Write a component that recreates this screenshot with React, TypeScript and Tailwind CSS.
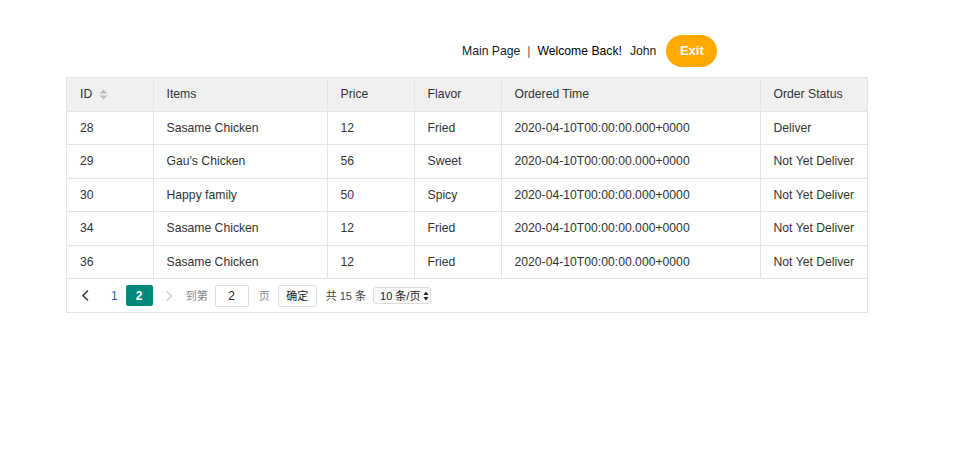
import React from "react";

const rows = [
  ["28", "Sasame Chicken", "12", "Fried", "2020-04-10T00:00:00.000+0000", "Deliver"],
  ["29", "Gau's Chicken", "56", "Sweet", "2020-04-10T00:00:00.000+0000", "Not Yet Deliver"],
  ["30", "Happy family", "50", "Spicy", "2020-04-10T00:00:00.000+0000", "Not Yet Deliver"],
  ["34", "Sasame Chicken", "12", "Fried", "2020-04-10T00:00:00.000+0000", "Not Yet Deliver"],
  ["36", "Sasame Chicken", "12", "Fried", "2020-04-10T00:00:00.000+0000", "Not Yet Deliver"],
];

const widths = ["w-[86px]", "w-[174px]", "w-[87px]", "w-[87px]", "w-[259px]", "w-[107px]"];
const heads = ["ID", "Items", "Price", "Flavor", "Ordered Time", "Order Status"];

export default function App() {
  return (
    <div className="w-[974px] h-[462px] overflow-hidden bg-white text-[12.2px] text-[#333]" style={{ fontFamily: '"Liberation Sans", "Noto Sans CJK SC", sans-serif' }}>
      <div className="flex items-center h-[34px] mt-[34px] pl-[462px] text-[12.2px] text-[#222]">
        <span>Main Page</span>
        <span className="mx-[7px] text-[#555]">|</span>
        <span className="text-black">Welcome Back!</span>
        <span className="ml-[8px]">John</span>
        <button className="ml-[10px] w-[51px] h-[32px] rounded-full bg-[#FFA900] text-white text-[13px] font-semibold">Exit</button>
      </div>
      <div className="ml-[66px] mt-[9px] w-[802px] border border-[#e4e4e4]">
        <table className="border-collapse table-fixed w-[800px]">
          <thead>
            <tr className="bg-[#f0f0f0] h-[33px]">
              {heads.map((h, i) => (
                <th key={h} className={`${widths[i]} text-left font-normal pl-[13px] text-[#333] ${i < 5 ? "border-r border-[#e4e4e4]" : ""} border-b border-[#e4e4e4]`}>
                  {i === 0 ? (
                    <span className="flex items-center gap-[7px]">
                      ID
                      <svg width="9" height="11" viewBox="0 0 9 11">
                        <path d="M4.5 0.5 L8.5 4.5 H0.5 Z" fill="#bbb" />
                        <path d="M4.5 10.5 L8.5 6.5 H0.5 Z" fill="#bbb" />
                      </svg>
                    </span>
                  ) : (
                    h
                  )}
                </th>
              ))}
            </tr>
          </thead>
          <tbody>
            {rows.map((r, ri) => (
              <tr key={ri} className="h-[33.6px]">
                {r.map((c, i) => (
                  <td key={i} className={`pl-[13px] ${i < 5 ? "border-r border-[#e4e4e4]" : ""} border-b border-[#e4e4e4] whitespace-nowrap`}>
                    {c}
                  </td>
                ))}
              </tr>
            ))}
          </tbody>
        </table>
        <div className="flex items-center h-[33px] text-[11px] text-[#555] whitespace-nowrap">
          <svg className="ml-[14px]" width="9" height="13" viewBox="0 0 9 13">
            <path d="M7 1.5 L2 6.5 L7 11.5" fill="none" stroke="#333" strokeWidth="1.5" />
          </svg>
          <span className="ml-[21px] text-[#2a5caa] text-[12px]">1</span>
          <span className="ml-[8px] w-[27px] h-[21px] rounded-[2px] bg-[#00897b] text-white font-bold text-[12px] flex items-center justify-center">2</span>
          <svg className="ml-[12px]" width="8" height="12" viewBox="0 0 8 12">
            <path d="M1.5 1 L6.5 6 L1.5 11" fill="none" stroke="#ccc" strokeWidth="1.2" />
          </svg>
          <span className="ml-[13px] text-[#888]">到第</span>
          <span className="ml-[7px] w-[34px] h-[22px] border border-[#ddd] rounded-[2px] flex items-center justify-center text-[#222] text-[12px]">2</span>
          <span className="ml-[10px] text-[#888]">页</span>
          <span className="ml-[8px] w-[39px] h-[22px] border border-[#ddd] rounded-[2px] flex items-center justify-center text-[#222]">确定</span>
          <span className="ml-[9px] text-[#444]">共 15 条</span>
          <span className="ml-[7px] h-[17px] w-[58px] border border-[#ddd] rounded-[3px] bg-[#f8f8f8] flex items-center pl-[6px] text-[#222]">
            10 条/页
            <svg className="ml-[3px]" width="6" height="10" viewBox="0 0 6 10">
              <path d="M3 0.5 L5.5 4 H0.5 Z" fill="#222" />
              <path d="M3 9.5 L5.5 6 H0.5 Z" fill="#222" />
            </svg>
          </span>
        </div>
      </div>
    </div>
  );
}
